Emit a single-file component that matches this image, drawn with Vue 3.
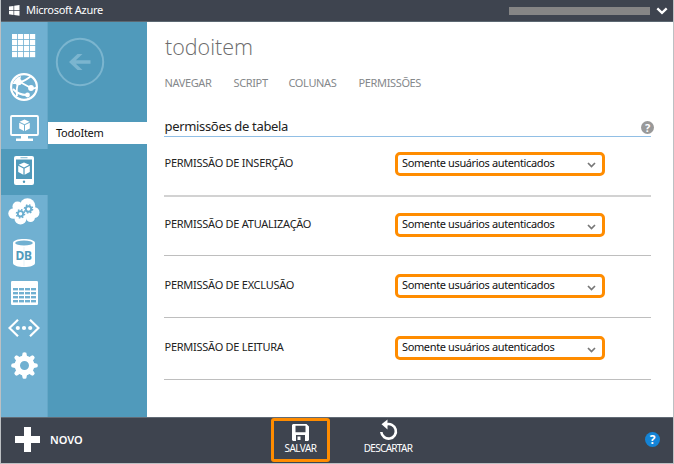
<script setup>
const tabs = [
  { label: 'NAVEGAR', cls: 'nav' },
  { label: 'SCRIPT', cls: 'script' },
  { label: 'COLUNAS', cls: 'cols' },
  { label: 'PERMISSÕES', cls: 'perms' },
]
const rows = [
  { label: 'PERMISSÃO DE INSERÇÃO', cls: 'insert' },
  { label: 'PERMISSÃO DE ATUALIZAÇÃO', cls: 'update' },
  { label: 'PERMISSÃO DE EXCLUSÃO', cls: 'remove' },
  { label: 'PERMISSÃO DE LEITURA', cls: 'read' },
]
const gridCells = Array.from({ length: 16 }, (_, i) => ({ x: (i % 4) * 6, y: Math.floor(i / 4) * 6 }))
const tableCells = Array.from({ length: 16 }, (_, i) => ({ x: 2 + (i % 4) * 6, y: 7 + Math.floor(i / 4) * 4 }))
const teeth = [0, 45, 90, 135, 180, 225, 270, 315]
</script>

<template>
  <div class="window">
    <header class="topbar">
      <svg class="winlogo" viewBox="0 0 11 11"><path d="M0 1.5L4.5.9V5H0zM5.2.8L10.5 0v5H5.2zM0 5.7h4.5v4.2L0 9.3zM5.2 5.7h5.3v5.1L5.2 10z" fill="#fff" /></svg>
      <span class="brand">Microsoft Azure</span>
      <span class="account"></span>
      <svg class="down" viewBox="0 0 12 8"><path d="M1.3 1.3L6 5.8l4.7-4.5" fill="none" stroke="#fff" stroke-width="2.3" /></svg>
    </header>

    <div class="body">
      <nav class="rail">
        <div class="cell all">
          <svg width="24" height="24" viewBox="0 0 24 24" fill="#fff"><rect v-for="(c, i) in gridCells" :key="i" :x="c.x" :y="c.y" width="5.2" height="5.2" /></svg>
        </div>
        <div class="cell web">
          <svg width="28" height="28" viewBox="0 0 28 28" fill="none" stroke="#fff">
            <circle cx="14" cy="14" r="12.900" stroke-width="2.200" />
            <path d="M10 9Q14 8.500 20.500 3.500M10 9L21 15M8.500 9Q6 15 7 23M3 16Q9 22.500 18 22M21 15Q24 16 26.500 14.500" stroke-width="1.900" />
            <path d="M2.500 11Q5 5 11 3L10 8L6 11z" fill="#fff" stroke="none" />
            <g fill="#fff" stroke="none"><circle cx="8.500" cy="9" r="3.300" /><circle cx="21" cy="15" r="2.900" /><circle cx="17.500" cy="22" r="2.400" /></g>
          </svg>
        </div>
        <div class="cell vm">
          <svg width="29" height="26" viewBox="0 0 29 26">
            <rect x="1" y="1" width="27" height="19" rx="1" fill="none" stroke="#fff" stroke-width="1.800" />
            <path d="M11 20h7v3.500h5V26H6v-2.500h5z" fill="#fff" />
            <path d="M14.500 4.500l5 2.200-5 2.500-5-2.500zM9.200 7.700l4.800 2.400v6l-4.800-2.600zM19.800 7.700L15 10.100v6l4.800-2.600z" fill="#fff" />
          </svg>
        </div>
        <div class="cell mobile">
          <svg width="20" height="29" viewBox="0 0 20 29">
            <rect width="20" height="29" rx="2" fill="#fff" />
            <path d="M2 3.500h16V23H2z" fill="#509abb" /><path d="M6.500 1.200h7v1h-7z" fill="#83b9d0" />
            <path d="M10 6.500l5.300 2.300-5.300 2.700-5.300-2.700zM4.200 9.800l5.200 2.700v6.300l-5.200-2.900zM15.800 9.800l-5.200 2.700v6.300l5.200-2.900z" fill="#fff" />
            <circle cx="10" cy="25.700" r="1.200" fill="#509abb" />
          </svg>
        </div>
        <div class="cell cloud">
          <svg width="32" height="27" viewBox="0 0 32 27">
            <g fill="#fff"><circle cx="5.500" cy="15.500" r="5.200" /><circle cx="9.500" cy="8.500" r="5" /><circle cx="19.500" cy="8" r="7.800" /><circle cx="26" cy="14.500" r="5.500" /><circle cx="22.500" cy="19.500" r="4.500" /><circle cx="12.500" cy="20.500" r="6" /><path d="M6 8h20v12H6z" /></g>
            <g fill="none" stroke="#6aaed0">
              <circle cx="12.500" cy="15.800" r="2.700" stroke-width="1.900" /><circle cx="12.500" cy="15.800" r="4.100" stroke-width="1.400" stroke-dasharray="1.6 1.620" />
              <circle cx="20.500" cy="11" r="2.700" stroke-width="1.900" /><circle cx="20.500" cy="11" r="4.100" stroke-width="1.400" stroke-dasharray="1.6 1.620" />
            </g>
          </svg>
        </div>
        <div class="cell db">
          <svg width="22" height="28" viewBox="0 0 22 28">
            <path d="M0 4C0 1.500 5 0 11 0s11 1.500 11 4v20c0 2.500-5 4-11 4S0 26.500 0 24z" fill="#fff" />
            <ellipse cx="11" cy="4" rx="8.800" ry="2.500" fill="#70b0d1" />
            <path d="M11 8v19" stroke="#dcecf4" stroke-width=".7" />
            <text x="10.700" y="21" text-anchor="middle" class="dbtext">DB</text>
          </svg>
        </div>
        <div class="cell table">
          <svg width="27" height="24" viewBox="0 0 27 24"><rect width="27" height="24" rx="1.200" fill="#fff" /><g fill="#70b0d1"><rect v-for="(c, i) in tableCells" :key="i" :x="c.x" :y="c.y" width="5" height="2.400" /></g></svg>
        </div>
        <div class="cell code">
          <svg width="32" height="18" viewBox="0 0 32 18"><path d="M10 .8L1.500 9l8.500 8.200M22 .8L30.500 9 22 17.200" fill="none" stroke="#fff" stroke-width="2.200" /><g fill="#fff"><circle cx="9.800" cy="9" r="2.100" /><circle cx="16" cy="9" r="2.100" /><circle cx="22.200" cy="9" r="2.100" /></g></svg>
        </div>
        <div class="cell gear">
          <svg width="27" height="27" viewBox="0 0 27 27"><circle cx="13.500" cy="13.500" r="7.200" fill="none" stroke="#fff" stroke-width="5.400" /><path v-for="a in teeth" :key="a" d="M10.800 5L11.700.8Q13.500-.4 15.300.8L16.200 5z" fill="#fff" :transform="`rotate(${a} 13.5 13.5)`" /></svg>
        </div>
      </nav>

      <aside class="side">
        <svg class="back" viewBox="0 0 50 50"><circle cx="25" cy="25" r="23.200" fill="none" stroke="#7bb5cf" stroke-width="2" /><path d="M14 25L22.500 17H27.500L20.800 23.200H35.500V26.800H20.800L27.500 33H22.500z" fill="#7bb5cf" /></svg>
        <div class="item"><span>TodoItem</span></div>
      </aside>

      <main class="content">
        <h1><span>todoitem</span></h1>
        <div class="tabs"><span v-for="t in tabs" :key="t.label" :class="t.cls">{{ t.label }}</span></div>
        <div class="heading">
          <h2>permissões de tabela</h2>
          <span class="help">?</span>
        </div>
        <div v-for="r in rows" :key="r.label" class="row" :class="r.cls">
          <span class="label">{{ r.label }}</span>
          <div class="select">
            <span>Somente usuários autenticados</span>
            <svg class="chev" viewBox="0 0 9 6"><path d="M1 1l3.500 3.500L8 1" fill="none" stroke="#777" stroke-width="1.700" /></svg>
          </div>
        </div>
      </main>
    </div>

    <footer class="bottom">
      <svg class="plus" viewBox="0 0 25 25"><path d="M9 0h7v9h9v7h-9v9H9v-9H0V9h9z" fill="#fff" /></svg>
      <span class="new">NOVO</span>
      <div class="save">
        <svg width="17" height="17" viewBox="0 0 17 17"><path fill-rule="evenodd" d="M1 0h13.500L17 2.500V16l-1 1H1l-1-1V1zM3.500 1.800v6.400h10V1.800zM4 11v6h9v-6z" fill="#fff" /><path d="M5.500 12.500h3V16h-3z" fill="#fff" /></svg>
        <span>SALVAR</span>
      </div>
      <div class="discard">
        <svg width="19" height="22" viewBox="0 0 19 22"><path d="M7 5.500A7.300 7.300 0 1 1 2.300 13" fill="none" stroke="#fff" stroke-width="2.600" /><path d="M2.500 5.300L8.500.5v10z" fill="#fff" /></svg>
        <span>DESCARTAR</span>
      </div>
      <span class="info">?</span>
    </footer>
  </div>
</template>

<style>
body { margin: 0; background: #fff; }
</style>
<style scoped>
* { box-sizing: border-box; }
.window { width: 674px; height: 464px; border: solid #bcc0c3; border-width: 0 1px 1px; background: #fff; font-family: "Noto Sans", "Open Sans", sans-serif; font-size: 11px; display: flex; flex-direction: column; white-space: nowrap; overflow: hidden; }
.topbar { height: 22px; background: #3e444f; border-bottom: 1px solid #5c6872; display: flex; align-items: center; color: #fff; flex: none; }
.winlogo { width: 11px; height: 11px; margin-left: 8px; }
.brand { font-size: 11px; line-height: 20px; margin: -1px 0 0 6px; letter-spacing: -.28px; }
.account { width: 141px; height: 8px; background: #858585; margin-left: auto; }
.down { width: 12px; height: 8px; margin: 0 5px 0 6px; }
.body { height: 395px; display: flex; flex: none; }
.rail { width: 47px; background: #70b0d1; border-right: 1px solid #65a7c7; display: flex; flex-direction: column; flex: none; }
.cell { display: flex; align-items: center; justify-content: center; width: 46px; flex: none; }
.cell svg { display: block; }
.all { height: 48px; }
.web { height: 34px; }
.vm { height: 45px; padding-top: 3px; }
.mobile { height: 46px; width: 47px; padding-right: 1px; padding-bottom: 4px; background: #509abb; }
.cloud { height: 32px; }
.db { height: 52px; }
.table { height: 28px; }
.code { height: 42px; }
.gear { height: 32px; }
.dbtext { font: bold 12px "Noto Sans"; fill: #509abb; letter-spacing: -.3px; }
.side { width: 99px; background: #509abb; flex: none; }
.back { display: block; width: 50px; height: 50px; margin: 15px 0 0 7px; }
.item { height: 22px; margin-top: 35px; background: #fff; color: #111; padding-left: 8px; line-height: 21px; letter-spacing: -.25px; }
.content { width: 504px; padding-left: 17px; }
h1, h2 { margin: 0; font-weight: 400; }
h1 { font: 300 21.5px/28px "Open Sans", "Noto Sans", sans-serif; color: #6c6c6c; margin-top: 11px; height: 28px; padding-left: 1px; }
.tabs { display: flex; height: 16px; line-height: 16px; margin-top: 14px; color: #85888b; letter-spacing: -.36px; }
.nav { width: 69px; }
.script { width: 55px; }
.cols { width: 70px; }
.heading { height: 25px; margin-top: 21px; border-bottom: 1px solid #91bfe5; display: flex; }
h2 { font-size: 13px; line-height: 28px; color: #222; letter-spacing: -.33px; }
.help, .info { border-radius: 50%; color: #fff; font-weight: 700; text-align: center; flex: none; }
.help { width: 13px; height: 13px; margin: 9px -3px 0 auto; background: #999; font-size: 11px; line-height: 13px; }
.tabs, h2, .label { padding-left: .5px; }
.row { display: flex; align-items: flex-start; border-bottom: 1px solid #bebebe; }
.insert { height: 60px; padding-top: 15px; border-bottom: 2px solid #d2d2d2; }
.update { height: 59px; padding-top: 16px; }
.remove { height: 62px; padding-top: 18px; }
.read { height: 62px; padding-top: 18px; }
.label { width: 231px; line-height: 22px; color: #222; letter-spacing: -.26px; }
.select { width: 210px; height: 24px; border: 3px solid #ff8c00; border-radius: 5px; padding: 0 7px 0 4px; display: flex; line-height: 16px; color: #111; letter-spacing: -.37px; }
.chev { width: 9px; height: 6px; margin: 8px -1px 0 auto; }
.insert .chev { margin-top: 7px; }
.bottom { height: 46px; background: #3e444f; border-top: 1px solid #626b75; color: #fff; display: flex; flex: none; }
.plus { width: 25px; height: 25px; margin: 9px 0 0 14px; }
.new { margin-left: 10px; line-height: 44px; font-weight: 600; width: 221px; }
.save { width: 59px; height: 44px; border: 3px solid #ff8c00; border-radius: 3px; display: flex; flex-direction: column; align-items: center; padding-top: 3px; }
.discard { width: 60px; margin-left: 28px; display: flex; flex-direction: column; align-items: center; padding-top: 1px; }
.save span, .discard span { font-size: 10px; line-height: 14px; letter-spacing: -.7px; }
.save svg, .discard svg { flex: none; }
.save span { letter-spacing: -.55px; }
.info { width: 15px; height: 15px; margin: 14px 13px 0 auto; background: #1484d6; font-size: 12px; line-height: 15px; }
</style>
